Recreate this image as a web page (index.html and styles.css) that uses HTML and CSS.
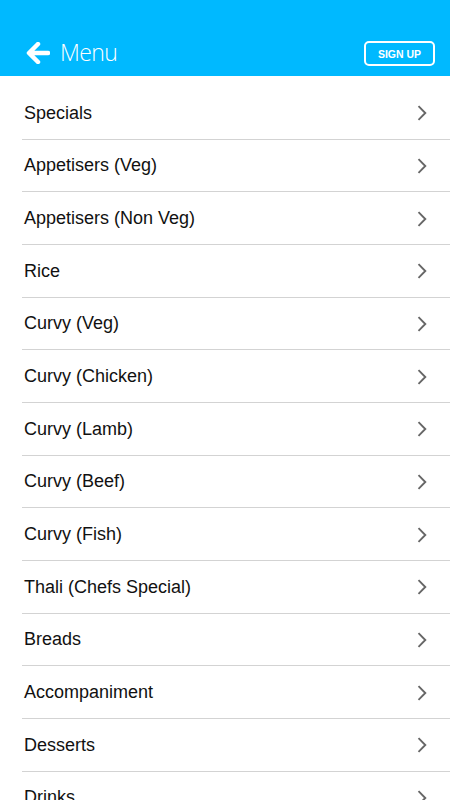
FILE: index.html
```html
<!DOCTYPE html>
<html>
<head>
<meta charset="utf-8">
<link rel="stylesheet" href="styles.css">
</head>
<body>
<header class="bar">
  <div class="title">
    <svg class="back" width="24" height="22" viewBox="0 0 24 22"><path d="M12 2 L3 11 L12 20 M3.5 11 H22" fill="none" stroke="#fff" stroke-width="4.5" stroke-linecap="round" stroke-linejoin="round"/></svg>
    <span>Menu</span>
  </div>
  <button class="signup">SIGN UP</button>
</header>
<ul class="list">
  <li>Specials</li>
  <li>Appetisers (Veg)</li>
  <li>Appetisers (Non Veg)</li>
  <li>Rice</li>
  <li>Curvy (Veg)</li>
  <li>Curvy (Chicken)</li>
  <li>Curvy (Lamb)</li>
  <li>Curvy (Beef)</li>
  <li>Curvy (Fish)</li>
  <li>Thali (Chefs Special)</li>
  <li>Breads</li>
  <li>Accompaniment</li>
  <li>Desserts</li>
  <li>Drinks</li>
</ul>
</body>
</html>
```
FILE: styles.css
```css
html, body { margin: 0; padding: 0; }
body { font-family: "Liberation Sans", Arial, sans-serif; background: #fff; overflow: hidden; height: 800px; }
.bar {
  height: 76px;
  background: #00b9ff;
  display: flex;
  align-items: flex-end;
  justify-content: space-between;
  padding: 0 15px 10px 26px;
  box-sizing: border-box;
}
.title { display: flex; align-items: center; gap: 10px; color: #fff; height: 24px; margin-bottom: 1px; }
.title span { font-family: "Open Sans", "Liberation Sans", sans-serif; font-weight: 300; font-size: 23px; letter-spacing: -0.6px; line-height: 24px; margin-top: -3px; }
.back { display: block; }
.signup {
  width: 71px; height: 25px;
  border: 2px solid #fff; border-radius: 5px;
  background: transparent; color: #fff;
  font-family: "Liberation Sans", Arial, sans-serif; font-weight: 700; font-size: 10.5px;
  padding: 0; margin-bottom: 0;
}
.list { list-style: none; margin: 0; padding: 11px 0 0 22px; }
.list li {
  height: 52.67px; box-sizing: border-box;
  border-bottom: 1px solid #d3d3d3;
  display: flex; align-items: center; justify-content: space-between;
  padding: 1px 22px 0 2px;
  font-size: 18px; color: #111;
}
.list li::after {
  content: "";
  width: 10px; height: 16px;
  background: url("data:image/svg+xml;utf8,<svg xmlns='http://www.w3.org/2000/svg' width='10' height='16' viewBox='0 0 10 16'><path d='M1.5 1.2 L8.3 8 L1.5 14.8' fill='none' stroke='%23666' stroke-width='1.9'/></svg>") no-repeat center;
  margin-right: 1px;
}
```
